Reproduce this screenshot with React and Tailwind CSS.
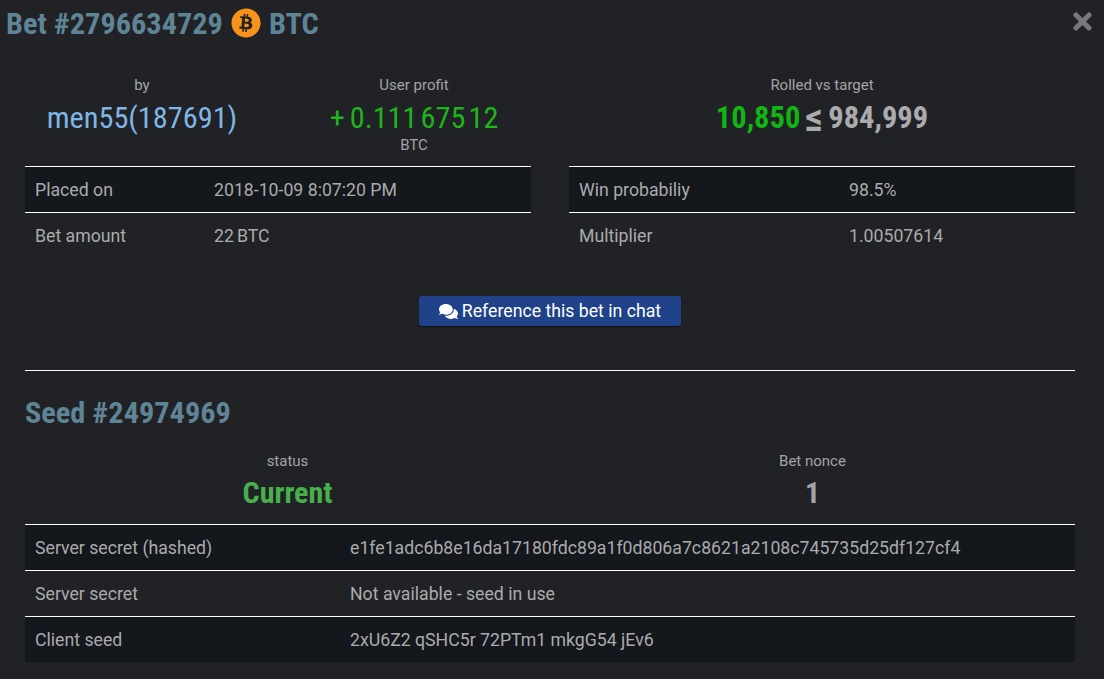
import { FaBitcoin, FaComments, FaTimes } from 'react-icons/fa';

const Row = ({ label, value, dark, labelWidth }) => (
    <div className={`flex h-[46px] items-center border-t border-white px-[10px] pt-[2px] text-[17.7px] text-[#aaabad] ${dark ? 'bg-[#14171c]' : ''}`}>
        <div className={labelWidth}>{label}</div>
        <div>{value}</div>
    </div>
);

const Row2 = ({ label, value, dark }) => (
    <Row label={label} value={value} dark={dark} labelWidth="w-[315px]" />
);

const Stat = ({ label, children, className }) => (
    <div className={`flex flex-col items-center ${className}`}>
        <div className="mb-[4px] h-[20px] text-[15px] leading-[20px] text-[#a3a4a7]">{label}</div>
        {children}
    </div>
);

const Cond = ({ children, className }) => (
    <span className={`font-bold [font-stretch:75%] ${className}`}>{children}</span>
);

export default function App() {
    return (
        <div className="relative h-[679px] w-[1104px] overflow-hidden bg-[#212226] font-['Roboto',sans-serif]">
            {/* title */}
            <div className="flex h-[48px] items-center gap-[8px] pl-[6px] text-[30.3px] text-[#5f8496]">
                <Cond>Bet #2796634729</Cond>
                <FaBitcoin className="mb-[2px] -rotate-[9deg] text-[30px] text-[#f7931a]" />
                <Cond>BTC</Cond>
            </div>
            <button className="absolute right-[8px] top-[8px] text-[27px] text-[#77787b]">
                <FaTimes />
            </button>

            <div className="pl-[25px] pr-[29px]">
                {/* bet stats */}
                <div className="mt-[27px] grid grid-cols-2 gap-x-[38px]">
                    <div className="grid h-[91px] grid-cols-2 gap-x-[38px]">
                        <Stat label="by">
                            <div className="text-[30.3px] leading-[38px] text-[#7fb6e6] [font-stretch:78%]">men55(187691)</div>
                        </Stat>
                        <Stat label="User profit">
                            <div className="flex gap-[3px] text-[30.3px] leading-[38px] text-[#1cb51c] [font-stretch:78%]">
                                <span className="mr-[2px]">+</span><span>0.111</span><span>675</span><span>12</span>
                            </div>
                            <div className="text-[15px] leading-[16px] text-[#a3a4a7]">BTC</div>
                        </Stat>
                    </div>
                    <Stat label="Rolled vs target">
                        <div className="flex items-center text-[30.5px] leading-[38px] text-[#aaabad]">
                            <Cond className="text-[#13b513]">10,850</Cond>
                            <Cond className="ml-[5px] mr-[5px] text-[40px] leading-[38px]">≤</Cond>
                            <Cond>984,999</Cond>
                        </div>
                    </Stat>
                </div>

                {/* bet details */}
                <div className="grid grid-cols-2 gap-x-[38px]">
                    <div>
                        <Row dark label="Placed on" value="2018-10-09 8:07:20 PM" labelWidth="w-[179px]" />
                        <Row label="Bet amount" value={<span className="flex gap-[3px]"><span>22</span><span>BTC</span></span>} labelWidth="w-[179px]" />
                    </div>
                    <div>
                        <Row dark label="Win probabiliy" value="98.5%" labelWidth="w-[270px]" />
                        <Row label="Multiplier" value="1.00507614" labelWidth="w-[270px]" />
                    </div>
                </div>

                <div className="mt-[38px] flex justify-center">
                    <button className="flex h-[30px] w-[262px] items-center justify-center gap-[4px] rounded-[3px] bg-[#1f4288] text-[17.7px] text-white shadow-[0_1px_1px_#111]">
                        <FaComments className="text-[19px]" />
                        Reference this bet in chat
                    </button>
                </div>

                <div className="mt-[44px] border-t border-white" />

                {/* seed */}
                <div className="mt-[24px] h-[36px] text-[30.3px] leading-[36px] text-[#5f8496]">
                    <Cond>Seed #24974969</Cond>
                </div>

                <div className="mt-[20px] grid h-[73px] grid-cols-2">
                    <Stat label="status">
                        <Cond className="text-[30px] leading-[36px] text-[#47b04b]">Current</Cond>
                    </Stat>
                    <Stat label="Bet nonce">
                        <Cond className="text-[30px] leading-[36px] text-[#a3a4a7]">1</Cond>
                    </Stat>
                </div>

                <Row2 dark label="Server secret (hashed)" value="e1fe1adc6b8e16da17180fdc89a1f0d806a7c8621a2108c745735d25df127cf4" />
                <Row2 label="Server secret" value="Not available - seed in use" />
                <Row2 dark label="Client seed" value="2xU6Z2 qSHC5r 72PTm1 mkgG54 jEv6" />
            </div>
        </div>
    );
}
